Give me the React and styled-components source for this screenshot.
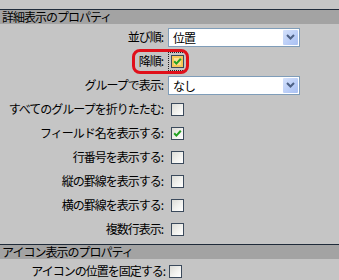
import React from "react";
import styled, { createGlobalStyle } from "styled-components";

const GlobalStyle = createGlobalStyle`
  html, body {
    margin: 0;
    padding: 0;
    background: #c5c5c5;
  }
  body {
    font-family: "Noto Sans CJK JP", "Noto Sans", sans-serif;
    font-size: 12px;
    color: #000;
  }
`;

const Page = styled.div`
  width: 339px;
  height: 280px;
  overflow: hidden;
  padding-top: 9px;
  box-sizing: border-box;
  background: #c5c5c5;
`;

const SectionHeader = styled.div`
  height: 14px;
  border-top: 1px solid #1f2b3a;
  background: #a3a3a3;
  padding-left: 2px;
  display: flex;
  align-items: center;
  font-size: 12px;
  letter-spacing: -1px;
  line-height: 14px;
  white-space: nowrap;
`;

const Rows = styled.div`
  display: flex;
  flex-direction: column;
  padding: ${(p) => p.$pad || "1px 0 3px"};
`;

const Row = styled.div`
  position: relative;
  display: grid;
  grid-template-columns: ${(p) => p.$labelWidth || 163}px 1fr;
  align-items: center;
  height: 24px;
`;

const Label = styled.div`
  text-align: right;
  white-space: nowrap;
  letter-spacing: -1px;
  line-height: 14px;
`;

const Control = styled.div`
  display: flex;
  align-items: center;
  padding-left: ${(p) => p.$indent ?? 8}px;
`;

const SelectBox = styled.div`
  width: 130px;
  height: 17px;
  margin-left: -3px;
  display: flex;
  align-items: stretch;
  background: #fff;
  border: 1px solid #7f9db9;
`;

const SelectValue = styled.div`
  flex: 1;
  padding-left: 4px;
  line-height: 17px;
  letter-spacing: -1px;
`;

const SelectButton = styled.div`
  width: 15px;
  margin: 1px;
  border-radius: 1px;
  background: linear-gradient(135deg, #d4e1fb 0%, #b9cdf7 60%, #a9c0f2 100%);
  display: flex;
  align-items: center;
  justify-content: center;
`;

const Box = styled.div`
  width: 11px;
  height: 11px;
  border: 1px solid #3b4a5c;
  background: linear-gradient(135deg, #dcdcd7 0%, #f2f2ef 55%, #ffffff 100%);
  display: flex;
  align-items: center;
  justify-content: center;
  box-sizing: content-box;
  ${(p) =>
    p.$hot &&
    `
    background: linear-gradient(135deg, #fde7a4 0%, #f8d77e 100%);
    box-shadow: inset 0 0 0 2px #f6c758;
    outline: 1px dotted #222;
    outline-offset: 2px;
  `}
`;

const Highlight = styled.div`
  position: absolute;
  left: 132px;
  top: 0px;
  width: 51px;
  height: 19px;
  border: 3px solid #e0101a;
  border-radius: 8px;
  pointer-events: none;
`;

const Chevron = () => (
  <svg width="9" height="6" viewBox="0 0 9 6">
    <path d="M1 1 L4.5 4.5 L8 1" fill="none" stroke="#4d6185" strokeWidth="2" />
  </svg>
);

const Check = () => (
  <svg width="9" height="9" viewBox="0 0 9 9">
    <path d="M1.2 4.2 L3.4 6.6 L7.8 1.8" fill="none" stroke="#21a121" strokeWidth="2" />
  </svg>
);

const Select = ({ value }) => (
  <SelectBox>
    <SelectValue>{value}</SelectValue>
    <SelectButton>
      <Chevron />
    </SelectButton>
  </SelectBox>
);

const Checkbox = ({ checked, hot }) => (
  <Box $hot={hot}>{checked && <Check />}</Box>
);

const detailRows = [
  { label: "並び順:", select: "位置" },
  { label: "降順:", checked: true, hot: true, mark: true },
  { label: "グループで表示:", select: "なし" },
  { label: "すべてのグループを折りたたむ:" },
  { label: "フィールド名を表示する:", checked: true },
  { label: "行番号を表示する:" },
  { label: "縦の罫線を表示する:" },
  { label: "横の罫線を表示する:" },
  { label: "複数行表示:" },
];

const App = () => (
  <Page>
    <GlobalStyle />
    <SectionHeader>詳細表示のプロパティ</SectionHeader>
    <Rows>
      {detailRows.map((r) => (
        <Row key={r.label}>
          <Label>{r.label}</Label>
          <Control>
            {r.select ? (
              <Select value={r.select} />
            ) : (
              <Checkbox checked={r.checked} hot={r.hot} />
            )}
          </Control>
          {r.mark && <Highlight />}
        </Row>
      ))}
    </Rows>
    <SectionHeader>アイコン表示のプロパティ</SectionHeader>
    <Rows $pad="0">
      <Row $labelWidth={165}>
        <Label>アイコンの位置を固定する:</Label>
        <Control $indent={4}>
          <Checkbox />
        </Control>
      </Row>
    </Rows>
  </Page>
);

export default App;
